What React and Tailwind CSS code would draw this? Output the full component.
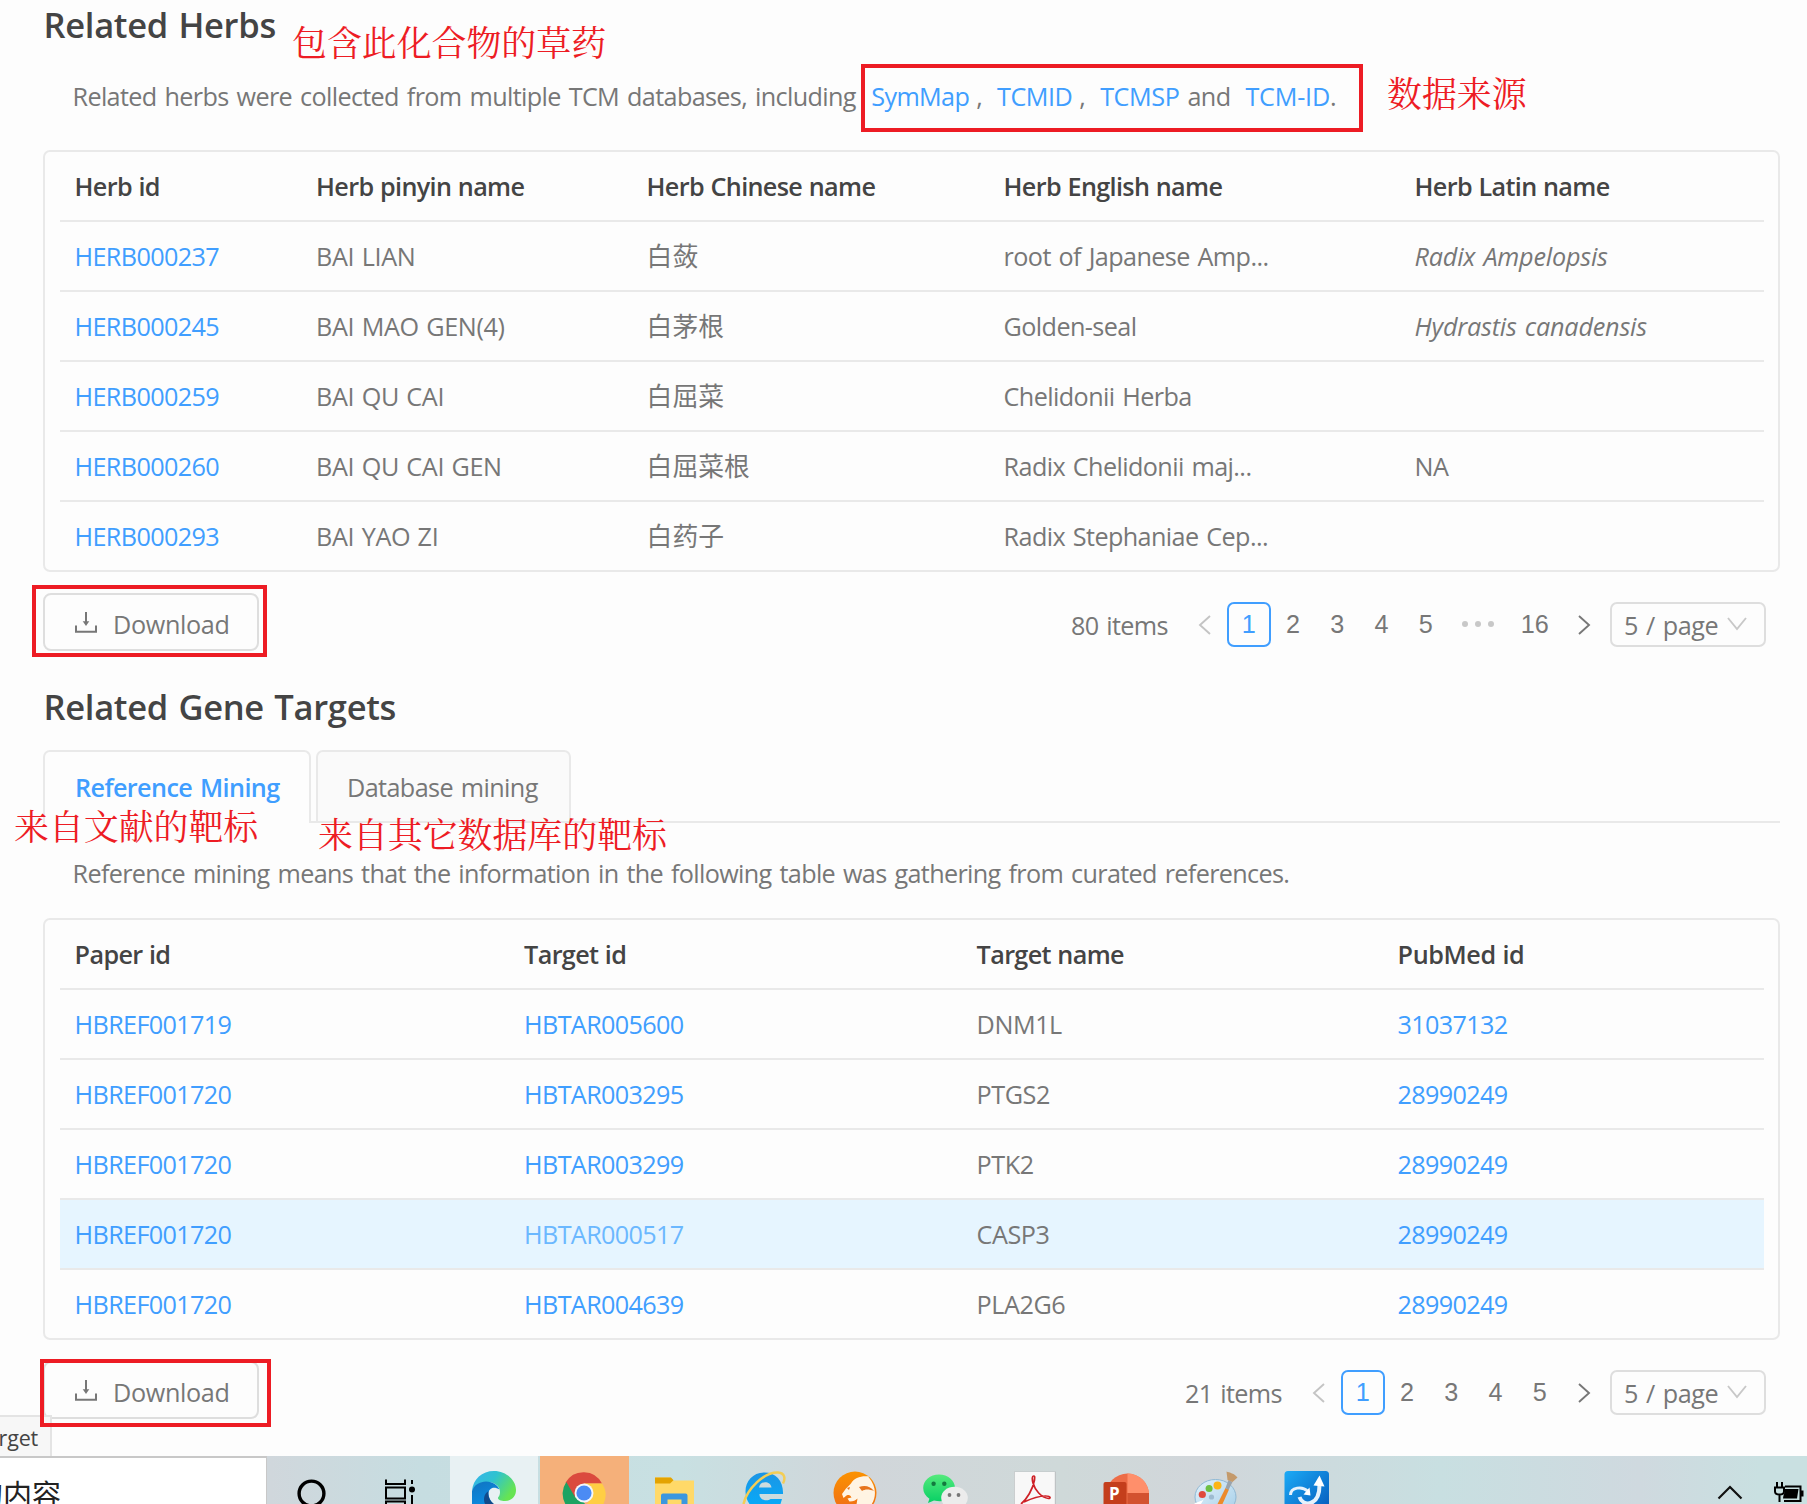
import React from "react";

const herbCols = "grid grid-cols-[241.5px_330.5px_357px_411px_1fr]";
const geneCols = "grid grid-cols-[449.5px_452.5px_421px_1fr]";

const herbs = [
  ["HERB000237", "BAI LIAN", "白蔹", "root of Japanese Amp...", "Radix Ampelopsis"],
  ["HERB000245", "BAI MAO GEN(4)", "白茅根", "Golden-seal", "Hydrastis canadensis"],
  ["HERB000259", "BAI QU CAI", "白屈菜", "Chelidonii Herba", ""],
  ["HERB000260", "BAI QU CAI GEN", "白屈菜根", "Radix Chelidonii maj...", "NA"],
  ["HERB000293", "BAI YAO ZI", "白药子", "Radix Stephaniae Cep...", ""],
];

const genes = [
  ["HBREF001719", "HBTAR005600", "DNM1L", "31037132"],
  ["HBREF001720", "HBTAR003295", "PTGS2", "28990249"],
  ["HBREF001720", "HBTAR003299", "PTK2", "28990249"],
  ["HBREF001720", "HBTAR000517", "CASP3", "28990249"],
  ["HBREF001720", "HBTAR004639", "PLA2G6", "28990249"],
];

function Row({ cols, className = "", children }) {
  return (
    <div className={`${cols} h-[70px] items-center border-b-2 border-[#e9e9e9] pl-[14.6px] whitespace-nowrap last:border-b-0 last:h-[68px] ${className}`}>
      {children}
    </div>
  );
}

function TableBox({ children }) {
  return <div className="rounded-[7px] border-2 border-[#e9e9e9] pr-[14px] pl-[15px]">{children}</div>;
}

function Link({ children, className = "text-[#409eff]" }) {
  return <a className={className}>{children}</a>;
}

function DownloadButton() {
  return (
    <button className="flex h-[58px] w-[216px] items-center rounded-[8px] border-2 border-[#dedede] pl-[29px]">
      <svg width="24" height="26" viewBox="0 0 24 26" className="mt-[1px] mr-[15px]" fill="none" stroke="#777" strokeWidth="2">
        <path d="M2 15.5v6.2h20v-6.2M12 2v11" />
        <path d="M8.7 11.3h6.6L12 16z" fill="#777" stroke="none" />
      </svg>
      <span className="pt-[5px] tracking-[-0.35px]">Download</span>
    </button>
  );
}

function Chevron({ dir, color }) {
  const d = { left: "M13 3L3 12l10 9", right: "M3 3l10 9-10 9" }[dir];
  return (
    <svg width="16" height="24" viewBox="0 0 16 24" fill="none" stroke={color} strokeWidth="1.9" className="mt-[2px]">
      <path d={d} />
    </svg>
  );
}

function Pager({ total, last }) {
  return (
    <div className="mt-[4px] mr-[14px] flex h-[45px] items-center">
      <span className="mr-[15px] pt-[2px]">{total} items</span>
      <span className="flex w-[44px] justify-center"><Chevron dir="left" color="#c4c4c4" /></span>
      <span className="flex h-[45px] w-[44px] items-center justify-center rounded-[7px] border-2 border-[#409eff] font-['Liberation_Sans',sans-serif] tracking-normal text-[#409eff]">1</span>
      {[2, 3, 4, 5].map((n) => (
        <span key={n} className="w-[44.3px] text-center font-['Liberation_Sans',sans-serif] tracking-normal">{n}</span>
      ))}
      {last && (
        <>
          <span className="flex w-[59.5px] justify-center gap-[7px]">
            <i className="size-[6px] rounded-full bg-[#c8c8c8]" />
            <i className="size-[6px] rounded-full bg-[#c8c8c8]" />
            <i className="size-[6px] rounded-full bg-[#c8c8c8]" />
          </span>
          <span className="w-[54.5px] text-center font-['Liberation_Sans',sans-serif] tracking-normal">{last}</span>
        </>
      )}
      <span className="mr-[4px] flex w-[44px] justify-center"><Chevron dir="right" color="#777" /></span>
      <span className="flex h-[45px] w-[156px] items-center rounded-[7px] border-2 border-[#dedede] pl-[12px]">
        <span className="pt-[2px] tracking-[-0.4px]">5 / page</span>
        <svg width="20" height="16" viewBox="0 0 20 16" fill="none" stroke="#c8c8c8" strokeWidth="1.9" className="-mt-[1px] ml-[9px]">
          <path d="M1 2l9 11 9-11" />
        </svg>
      </span>
    </div>
  );
}

function Note({ className, children }) {
  return (
    <div className={`absolute text-[34.9px] leading-[40px] font-normal tracking-normal whitespace-nowrap text-[#ed1c24] font-['Noto_Serif_CJK_SC','Noto_Sans_CJK_SC',serif] ${className}`}>
      {children}
    </div>
  );
}

function Frame({ className }) {
  return <div className={`absolute border-[4.6px] border-[#ed1c24] ${className}`} />;
}

function AppIcon({ className = "w-[90.3px]", children }) {
  return (
    <div className={`flex h-[48px] shrink-0 justify-center pt-[15px] ${className}`}>
      <svg width="46" height="33" viewBox="0 0 46 33">{children}</svg>
    </div>
  );
}

function Taskbar() {
  return (
    <div className="flex h-[48px] overflow-hidden bg-[linear-gradient(90deg,#d0d7dc_270px,#c6dde1_420px,#c8e0e2_680px,#d1d6da_860px,#cfd9d9_1060px,#d1d6da_1200px,#c8dfe1_1440px,#cfd9df_1640px,#c9e0e1_1760px)]">
      <div className="flex h-[48px] w-[267px] shrink-0 justify-start overflow-hidden border-t-2 border-r border-[#c8c8c8] bg-white">
        <span className="-ml-[26px] mt-[14px] text-[29px] leading-[42px] tracking-normal text-[#222] font-['Noto_Sans_CJK_SC',sans-serif]">的内容</span>
      </div>
      <AppIcon>
        <circle cx="22.500" cy="22.500" r="12.400" fill="none" stroke="#000" strokeWidth="3.400" />
      </AppIcon>
      <AppIcon className="w-[91.2px]">
        <g fill="none" stroke="#000" strokeWidth="2">
          <path d="M6 8.500v4.500h19v-4.500M6 16.500h19v11H6zM6 34v-3.500h19V34M32 9v4M32 24v10" />
          <circle cx="32" cy="18.500" r="3" fill="#000" stroke="none" />
        </g>
      </AppIcon>
      <AppIcon className="ml-[1.5px] w-[88.5px] bg-[#e8f1f3]">
        <defs>
          <linearGradient id="edgeTop" x1="0" y1="0" x2="1" y2="0.5">
            <stop offset="0" stopColor="#37b3ee" />
            <stop offset="0.5" stopColor="#2fc3cf" />
            <stop offset="1" stopColor="#66e452" />
          </linearGradient>
          <linearGradient id="edgeLeft" x1="0" y1="0" x2="0.5" y2="1">
            <stop offset="0" stopColor="#1173c0" />
            <stop offset="1" stopColor="#0a8be0" />
          </linearGradient>
        </defs>
        <path d="M1 20C2 8 11 0 23 0s22 9 22 19c0 7-5 11-11 11-4 0-7-1-7-3 0-1 2-2 2-6 0-7-7-10-13-10C9 11 3 15 1 20z" fill="url(#edgeTop)" />
        <path d="M1 33V20c2-6 8-9.500 14-9.500 7 0 12 4 13.500 8-6-4-11-1-11 4 0 4 2 8 5 10.500z" fill="url(#edgeLeft)" />
        <path d="M17.500 20C13 23 12 28 14 33h9c-4-3-6.500-8-5.500-13z" fill="#114a8b" />
      </AppIcon>
      <AppIcon className="ml-[1.5px] w-[89px] bg-[#f5b07a]">
        <path d="M4.600 11.500A20.700 20.700 0 0 1 41 12.500H23L13 27z" fill="#db4a3e" />
        <path d="M5.300 11a20.700 20.700 0 0 0-1 22H24l-2-3-8-4z" fill="#1da362" />
        <path d="M23 12.500h18A20.700 20.700 0 0 1 42.500 33H26l6-9z" fill="#ffce44" />
        <circle cx="23" cy="22" r="9.500" fill="#f4f6fa" />
        <circle cx="23" cy="22" r="7.600" fill="#4b8bf4" />
      </AppIcon>
      <AppIcon>
        <path d="M4 6.500h15.500l3 3H43V33H4z" fill="#ffd968" />
        <path d="M4 6.500h16l2.500 2.700L19 12.500H4z" fill="#e4a300" />
        <path d="M10 33V24.500q0-2 2-2h22.500q2 0 2 2V33h-6v-4.500h-14V33z" fill="#3b97df" />
      </AppIcon>
      <AppIcon>
        <defs>
          <linearGradient id="ie" x1="0" y1="0" x2="0" y2="1">
            <stop offset="0" stopColor="#1c95e4" />
            <stop offset="1" stopColor="#08a9f8" />
          </linearGradient>
        </defs>
        <path fillRule="evenodd" d="M23.500 1.500C12 1.500 4.500 10 4.500 20.500c0 5 1.500 9 4 12.500h31l1.500-5H29.500c-2 2-8 2-10-1.500-.8-1-1-2-1-3.500H42C42.500 10 35 1.500 23.500 1.500zM18 16.500c1-7 11.500-7 12.500 0z" fill="url(#ie)" />
        <path d="M2.500 33C6 18 23 1 37 1.500c7 .5 7.500 6 5 11" fill="none" stroke="#f3cd55" strokeWidth="2.500" />
      </AppIcon>
      <AppIcon>
        <defs>
          <linearGradient id="cat" x1="0" y1="0" x2="0" y2="1">
            <stop offset="0" stopColor="#fb9200" />
            <stop offset="1" stopColor="#ee6a19" />
          </linearGradient>
        </defs>
        <circle cx="23" cy="22" r="21.500" fill="url(#cat)" />
        <path d="M37 5.500c-7-1-15 1-18 7l-5 5-4 5.500 1.500 4 3-2.500c3-1 4 0 5 2l-4 1 2 3c4 0 6-1 8-3l-1 6h15c5-8 5-18-3-27.500z" fill="#fff4e3" />
        <path d="M27 16c6-2 11-1 15 4-5-2-9-2-12 0M15 17l3-1-1 3z" fill="#e7741c" />
      </AppIcon>
      <AppIcon>
        <defs>
          <linearGradient id="chat" x1="0" y1="0" x2="0" y2="1">
            <stop offset="0" stopColor="#55ea7c" />
            <stop offset="1" stopColor="#06cf64" />
          </linearGradient>
        </defs>
        <path d="M17 3.500C8 3.500 1.200 9.500 1.200 17c0 4.500 2.300 8 6.200 10.800L6 32l6-2.500c12 3 21-3 21-12.500 0-7.500-7-13.500-16-13.500z" fill="url(#chat)" />
        <circle cx="11.600" cy="12.800" r="2.200" fill="#137a3f" />
        <circle cx="22.300" cy="12.800" r="2.200" fill="#137a3f" />
        <ellipse cx="32.500" cy="27" rx="13.300" ry="11.200" fill="#ececec" />
        <circle cx="27.500" cy="24" r="1.900" fill="#777" />
        <circle cx="36.500" cy="24" r="1.900" fill="#777" />
      </AppIcon>
      <AppIcon>
        <path d="M2 .500h42V33H2z" fill="#bfc3c5" />
        <path d="M2.800 1h40V33h-40z" fill="#f8f8f8" />
        <path d="M9 33C15 28 21 18 22.500 9c.3-3.500.3-4-1-4-1.500 0-1.500 3-.5 7 2 7 8 14.500 15.500 15.500 2.500 0 2-2.500-2-2.500-7-.3-14 2-22.500 6" fill="none" stroke="#ce2026" strokeWidth="1.700" />
      </AppIcon>
      <AppIcon>
        <circle cx="24.500" cy="24" r="21.500" fill="#ed6c47" />
        <path d="M24.500 2.500A21.500 21.500 0 0 1 46 22H24.500z" fill="#ff8f6b" />
        <path d="M24.500 22H46V33H24.500z" fill="#d35230" />
        <rect x=".5" y="11" width="23" height="24" rx="2" fill="#c43e1c" />
        <text x="6" y="28.500" fontSize="17" fontWeight="700" fill="#fff" fontFamily="Open Sans, sans-serif">P</text>
      </AppIcon>
      <AppIcon>
        <defs>
          <linearGradient id="palette" x1="0" y1="0" x2="1" y2="1">
            <stop offset="0" stopColor="#e3f1fa" />
            <stop offset="1" stopColor="#a5cfe9" />
          </linearGradient>
        </defs>
        <ellipse cx="22.500" cy="26" rx="20.500" ry="17.500" fill="url(#palette)" stroke="#8fb8d4" />
        <path d="M1 33c4-3 7-2 10-5l-3 5z" fill="#fff" />
        <circle cx="9.300" cy="23.500" r="3.600" fill="#e04a3c" />
        <circle cx="16.100" cy="17.500" r="3.500" fill="#6dc043" />
        <circle cx="24.500" cy="14.500" r="4" fill="#fdb515" />
        <circle cx="18.500" cy="26" r="2.600" fill="#9dbbd0" />
        <path d="M24.500 33l8-16 3.500 1.500L29.500 33z" fill="#ec8b2c" />
        <path d="M32.500 17l3-8 4 2-4 8z" fill="#9aa3ab" />
        <path d="M33.500 .500c3 1 8 2 11 6l-5 4.500-5-2z" fill="#c49a6c" />
      </AppIcon>
      <AppIcon>
        <defs>
          <linearGradient id="sync" x1="0" y1="0" x2="1" y2="1">
            <stop offset="0" stopColor="#1cabf6" />
            <stop offset="1" stopColor="#0355b8" />
          </linearGradient>
        </defs>
        <rect x="1.500" y="0" width="44.500" height="46" rx="3.500" fill="url(#sync)" />
        <path d="M7.500 24c0-8 12-9 17-4" fill="none" stroke="#e6f2fc" strokeWidth="3" />
        <path d="M20.500 23.500l6-7 1 8z" fill="#fff" />
        <path d="M16.500 26c3 10 20 10 20-12" fill="none" stroke="#e6f2fc" strokeWidth="4" />
        <path d="M30.500 14.500l6-10 5 11z" fill="#fff" />
      </AppIcon>
      <div className="ml-auto flex shrink-0">
        <svg width="26" height="48" viewBox="0 0 26 48" fill="none" stroke="#111" strokeWidth="2.200">
          <path d="M1.500 42.500L13 31l11.500 11.500" />
        </svg>
        <svg width="31" height="48" viewBox="0 0 31 48" className="mr-[3px] ml-[30px]">
          <path d="M12 30.500h15.500V45H11" fill="none" stroke="#000" strokeWidth="2" />
          <path d="M28 34.500h2.500v6H28z" />
          <path d="M12 33h13.500L24 42.500H10c0-3 2-6 2-9.500z" />
          <path d="M4 26v5M9 26v5M2 31.500h9v4c0 4-9 4-9 0zM6.500 38.500V46" fill="none" stroke="#000" strokeWidth="2" />
        </svg>
      </div>
    </div>
  );
}

export default function App() {
  return (
    <div className="relative flex h-[1504px] w-[1807px] flex-col overflow-hidden bg-[#fdfdfd] font-['Open_Sans','Noto_Sans_CJK_SC',sans-serif] text-[25.2px] leading-[35px] tracking-[-0.65px] text-[#777] [word-spacing:1.8px]">
      <main className="flex h-[1456px] flex-col pr-[27px] pl-[43px]">
        <h1 className="h-[50px] pl-[0.5px] text-[34.5px] leading-[49px] font-semibold tracking-[-0.3px] text-[#444]">Related Herbs</h1>
        <p className="h-[100px] pl-[29.5px] leading-[92px] whitespace-nowrap [word-spacing:2.1px]">
          Related herbs were collected from multiple TCM databases, including
          <Link className="ml-[15.5px] text-[#409eff]">SymMap</Link>
          <span className="ml-[7px]">,</span>
          <Link className="ml-[15px] tracking-[-0.5px] text-[#409eff]">TCMID</Link>
          <span className="ml-[7px]">,</span>
          <Link className="ml-[15px] tracking-[-0.4px] text-[#409eff]">TCMSP</Link> and
          <Link className="ml-[15px] tracking-[-0.2px] text-[#409eff]">TCM-ID</Link>.
        </p>
        <TableBox>
          <Row cols={herbCols} className="font-semibold text-[#444] [word-spacing:0.6px]">
            <span>Herb id</span>
            <span>Herb pinyin name</span>
            <span>Herb Chinese name</span>
            <span>Herb English name</span>
            <span>Herb Latin name</span>
          </Row>
          {herbs.map(([id, pinyin, zh, en, latin]) => (
            <Row key={id} cols={herbCols}>
              <Link>{id}</Link>
              <span className="tracking-[-0.35px] [word-spacing:1.2px]">{pinyin}</span>
              <span className="pt-px tracking-normal text-[25.8px]">{zh}</span>
              <span className="tracking-[-0.6px]">{en}</span>
              <span className={latin === "NA" ? "" : "tracking-[-0.2px] italic"}>{latin}</span>
            </Row>
          ))}
        </TableBox>
        <div className="mt-[21px] flex h-[58px] items-center justify-between">
          <DownloadButton />
          <Pager total="80" last="16" />
        </div>
        <h1 className="h-[99px] pt-[12px] pl-[0.5px] text-[34.5px] leading-[87px] font-semibold tracking-[-0.3px] text-[#444]">Related Gene Targets</h1>
        <div className="flex h-[73px]">
          <div className="w-[268px] rounded-t-[7px] border-2 border-b-0 border-[#e9e9e9] pl-[30px] leading-[70px] font-semibold tracking-[-0.6px] whitespace-nowrap text-[#409eff]">Reference Mining</div>
          <div className="w-[5px] border-b-2 border-[#e9e9e9]" />
          <div className="w-[255px] rounded-t-[7px] border-2 border-[#e9e9e9] bg-[#fafafa] pl-[29px] leading-[70px] tracking-[-0.6px] whitespace-nowrap">Database mining</div>
          <div className="flex-1 border-b-2 border-[#e9e9e9]" />
        </div>
        <p className="h-[95px] pt-[5px] pl-[29.5px] leading-[91px] whitespace-nowrap [word-spacing:2px]">
          Reference mining means that the information in the following table was gathering from curated references.
        </p>
        <TableBox>
          <Row cols={geneCols} className="font-semibold text-[#444] [word-spacing:0.6px]">
            <span>Paper id</span>
            <span>Target id</span>
            <span>Target name</span>
            <span className="tracking-[-0.4px]">PubMed id</span>
          </Row>
          {genes.map(([paper, target, name, pubmed], i) => (
            <Row key={target} cols={geneCols} className={i === 3 ? "bg-[#e6f5ff]" : ""}>
              <Link>{paper}</Link>
              <Link className={i === 3 ? "text-[#6bb8ff]" : "text-[#409eff]"}>{target}</Link>
              <span className="tracking-[-0.45px]">{name}</span>
              <Link>{pubmed}</Link>
            </Row>
          ))}
        </TableBox>
        <div className="mt-[21px] flex h-[58px] items-center justify-between">
          <DownloadButton />
          <Pager total="21" />
        </div>
      </main>
      <Taskbar />

      <div className="absolute top-[1415px] left-0 flex h-[41px] w-[52px] justify-end overflow-hidden border-t-2 border-r-2 border-[#e4e4e4] bg-[#f7f7f7] pr-[12px] text-[21.5px] leading-[41px] tracking-[-0.2px] text-[#444]">target</div>
      <Frame className="top-[64px] left-[861px] h-[68px] w-[502px]" />
      <Frame className="top-[585px] left-[32px] h-[72px] w-[235px]" />
      <Frame className="top-[1359px] left-[40px] h-[68px] w-[231px]" />
      <Note className="top-[21px] left-[292px]">包含此化合物的草药</Note>
      <Note className="top-[72px] left-[1387px]">数据来源</Note>
      <Note className="top-[805px] left-[14px]">来自文献的靶标</Note>
      <Note className="top-[813px] left-[318px]">来自其它数据库的靶标</Note>
    </div>
  );
}
